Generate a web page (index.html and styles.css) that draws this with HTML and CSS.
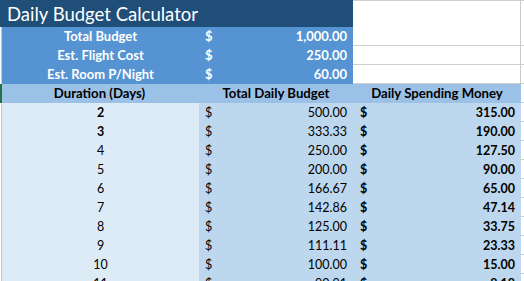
FILE: index.html
```html
<!DOCTYPE html>
<html>
<head>
<meta charset="utf-8">
<link rel="stylesheet" href="styles.css">
</head>
<body>
<div class="sheet">
  <div class="row title-row">
    <div class="gut"></div>
    <div class="title">Daily Budget Calculator</div>
    <div class="blank top"></div>
    <div class="edge top"></div>
  </div>
  <div class="row input-row">
    <div class="gut"></div>
    <div class="c a label">Total Budget</div>
    <div class="c b money"><span>$</span><span>1,000.00</span></div>
    <div class="blank"></div>
    <div class="edge"></div>
  </div>
  <div class="row input-row">
    <div class="gut"></div>
    <div class="c a label">Est. Flight Cost</div>
    <div class="c b money"><span>$</span><span>250.00</span></div>
    <div class="blank"></div>
    <div class="edge"></div>
  </div>
  <div class="row input-row">
    <div class="gut"></div>
    <div class="c a label">Est. Room P/Night</div>
    <div class="c b money"><span>$</span><span>60.00</span></div>
    <div class="blank"></div>
    <div class="edge"></div>
  </div>
  <div class="row head-row">
    <div class="gut sel"></div>
    <div class="c a">Duration (Days)</div>
    <div class="c b">Total Daily Budget</div>
    <div class="c cc">Daily Spending Money</div>
    <div class="edge"></div>
  </div>
  <div class="row data-row">
    <div class="gut"></div>
    <div class="c a bold">2</div>
    <div class="c b money"><span>$</span><span>500.00</span></div>
    <div class="c cc money bold"><span>$</span><span>315.00</span></div>
    <div class="edge"></div>
  </div>
  <div class="row data-row">
    <div class="gut"></div>
    <div class="c a bold">3</div>
    <div class="c b money"><span>$</span><span>333.33</span></div>
    <div class="c cc money bold"><span>$</span><span>190.00</span></div>
    <div class="edge"></div>
  </div>
  <div class="row data-row">
    <div class="gut"></div>
    <div class="c a">4</div>
    <div class="c b money"><span>$</span><span>250.00</span></div>
    <div class="c cc money bold"><span>$</span><span>127.50</span></div>
    <div class="edge"></div>
  </div>
  <div class="row data-row">
    <div class="gut"></div>
    <div class="c a">5</div>
    <div class="c b money"><span>$</span><span>200.00</span></div>
    <div class="c cc money bold"><span>$</span><span>90.00</span></div>
    <div class="edge"></div>
  </div>
  <div class="row data-row">
    <div class="gut"></div>
    <div class="c a">6</div>
    <div class="c b money"><span>$</span><span>166.67</span></div>
    <div class="c cc money bold"><span>$</span><span>65.00</span></div>
    <div class="edge"></div>
  </div>
  <div class="row data-row">
    <div class="gut"></div>
    <div class="c a">7</div>
    <div class="c b money"><span>$</span><span>142.86</span></div>
    <div class="c cc money bold"><span>$</span><span>47.14</span></div>
    <div class="edge"></div>
  </div>
  <div class="row data-row">
    <div class="gut"></div>
    <div class="c a">8</div>
    <div class="c b money"><span>$</span><span>125.00</span></div>
    <div class="c cc money bold"><span>$</span><span>33.75</span></div>
    <div class="edge"></div>
  </div>
  <div class="row data-row">
    <div class="gut"></div>
    <div class="c a">9</div>
    <div class="c b money"><span>$</span><span>111.11</span></div>
    <div class="c cc money bold"><span>$</span><span>23.33</span></div>
    <div class="edge"></div>
  </div>
  <div class="row data-row">
    <div class="gut"></div>
    <div class="c a">10</div>
    <div class="c b money"><span>$</span><span>100.00</span></div>
    <div class="c cc money bold"><span>$</span><span>15.00</span></div>
    <div class="edge"></div>
  </div>
  <div class="row data-row">
    <div class="gut"></div>
    <div class="c a">11</div>
    <div class="c b money"><span>$</span><span>90.91</span></div>
    <div class="c cc money bold"><span>$</span><span>8.18</span></div>
    <div class="edge"></div>
  </div>
</div>
</body>
</html>
```

FILE: styles.css
```css
* { box-sizing: border-box; }
html, body { margin: 0; padding: 0; background: #fff; overflow: hidden; }
body { font-family: Lato, "Liberation Sans", sans-serif; font-size: 12.5px; color: #000; }

.sheet { width: 524px; }

.row {
  display: grid;
  grid-template-columns: 2px 197px 154px 168px 3px;
  height: 19px;
  line-height: 19px;
}
.title-row { height: 27px; line-height: 28px; grid-template-columns: 2px 351px 168px 3px; }

.gut { border-left: 1px solid #fff; border-right: 1px solid #c8c8c8; background: #fff; }
.gut.sel { background: #217346; border: none; }
.title-row .gut { background: #1f4e78; border: none; }

.title {
  background: #1f4e78;
  color: #fff;
  font-size: 18.5px;
  padding-left: 5px;
  white-space: nowrap;
}

.blank { background: #fff; border-bottom: 1px solid #d0d0d0; border-right: 1px solid #c8c8c8; }
.blank.top { border-top: 1px solid #d0d0d0; }
.edge { background: #fff; border-bottom: 1px solid #d0d0d0; }
.edge.top { border-top: 1px solid #d0d0d0; }

.c { white-space: nowrap; overflow: hidden; }
.a { text-align: center; }
.b, .cc { text-align: center; }

.input-row .c { background: #5593d2; color: #fff; font-weight: 700; font-size: 13px; }
.input-row .label { font-size: 13px; }
.head-row .c { background: #9bc2e6; font-weight: 700; font-size: 13.2px; }
.head-row .a { padding-right: 2px; }
.data-row .a { background: #ddebf7; }
.data-row .b, .data-row .cc { background: #bdd7ee; }
.bold { font-weight: 700; }

.money { display: flex; justify-content: space-between; padding-left: 6px; padding-right: 6px; }
.cc.money { padding-left: 7px; padding-right: 6px; }
```
